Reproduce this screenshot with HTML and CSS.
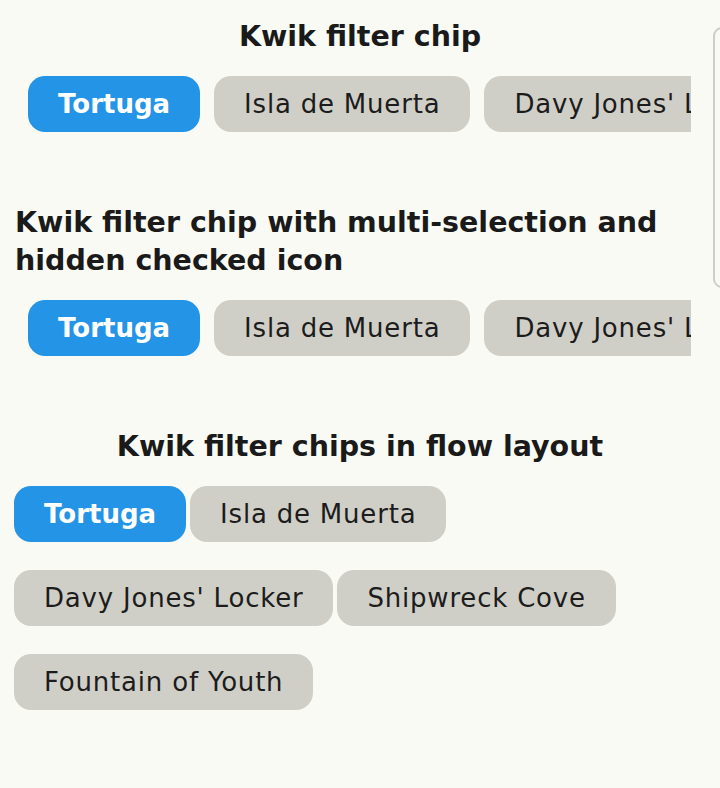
FILE: index.html
```html
<!DOCTYPE html>
<html lang="en">
<head>
<meta charset="utf-8">
<title>Kwik filter chips</title>
<link rel="stylesheet" href="styles.css">
</head>
<body>
<main class="page">
  <section class="demo">
    <h2 class="demo-title demo-title--center">Kwik filter chip</h2>
    <div class="chip-scroller">
      <div class="chip-row">
        <button class="chip chip--selected">Tortuga</button>
        <button class="chip">Isla de Muerta</button>
        <button class="chip">Davy Jones' Locker</button>
        <button class="chip">Shipwreck Cove</button>
        <button class="chip">Fountain of Youth</button>
      </div>
    </div>
  </section>

  <section class="demo">
    <h2 class="demo-title">Kwik filter chip with multi-selection and hidden checked icon</h2>
    <div class="chip-scroller">
      <div class="chip-row">
        <button class="chip chip--selected">Tortuga</button>
        <button class="chip">Isla de Muerta</button>
        <button class="chip">Davy Jones' Locker</button>
        <button class="chip">Shipwreck Cove</button>
        <button class="chip">Fountain of Youth</button>
      </div>
    </div>
  </section>

  <section class="demo">
    <h2 class="demo-title demo-title--center">Kwik filter chips in flow layout</h2>
    <div class="chip-flow">
      <button class="chip chip--selected">Tortuga</button>
      <button class="chip">Isla de Muerta</button>
      <button class="chip">Davy Jones' Locker</button>
      <button class="chip">Shipwreck Cove</button>
      <button class="chip">Fountain of Youth</button>
    </div>
  </section>
</main>
<div class="scroll-edge"></div>
</body>
</html>
```

FILE: styles.css
```css
html, body {
  margin: 0;
  padding: 0;
}

body {
  background: #fafaf4;
  font-family: "DejaVu Sans", "Noto Sans", sans-serif;
  color: #141414;
  width: 720px;
  height: 788px;
  overflow: hidden;
  position: relative;
}

.page {
  display: flex;
  flex-direction: column;
  gap: 72px;
  padding: 18px 14px 0 14px;
  box-sizing: border-box;
  width: 720px;
}

.demo {
  display: flex;
  flex-direction: column;
  gap: 20px;
}

.demo-title {
  margin: 0;
  padding-left: 1px;
  font-size: 28.5px;
  font-weight: 700;
  line-height: 38px;
  color: #1a1a1a;
  width: 666px;
}

.demo-title--center {
  text-align: center;
  width: auto;
  padding-left: 0;
}

.chip-scroller {
  width: 677px;
  overflow: hidden;
}

.chip-row {
  display: flex;
  gap: 14px;
  padding-left: 14px;
}

.chip-flow {
  display: flex;
  flex-wrap: wrap;
  column-gap: 4px;
  row-gap: 28px;
  width: 692px;
}

.chip {
  flex-shrink: 0;
  display: inline-flex;
  align-items: center;
  justify-content: center;
  height: 56px;
  padding: 0 30px;
  border: none;
  border-radius: 17px;
  background: #d0cfc7;
  color: #1c1c1c;
  font-family: "DejaVu Sans", "Noto Sans", sans-serif;
  font-size: 26px;
  letter-spacing: 0.8px;
  font-weight: 400;
  white-space: nowrap;
  cursor: pointer;
}

.chip--selected {
  background: #2394e6;
  color: #ffffff;
  font-weight: 700;
  letter-spacing: 0;
}

.scroll-edge {
  position: absolute;
  left: 713px;
  top: 27px;
  width: 30px;
  height: 261px;
  border: 2px solid #cdcdcd;
  border-radius: 9px;
  box-sizing: border-box;
}
```
